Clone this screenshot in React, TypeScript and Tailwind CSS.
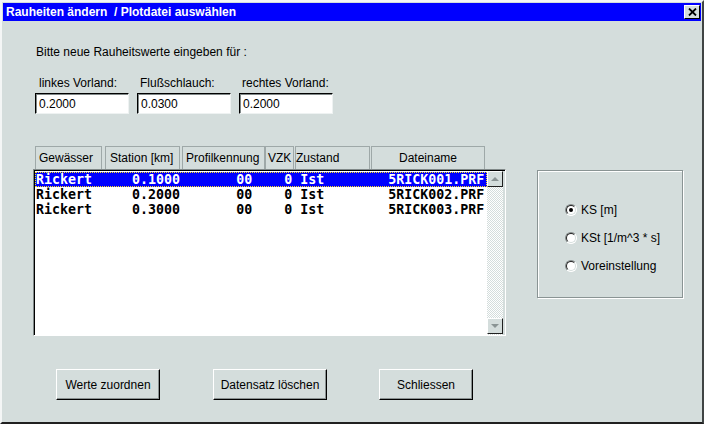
import React from "react";

const rows = [
  ["Rickert", "0.1000", "00", "0", "Ist", "5RICK001.PRF"],
  ["Rickert", "0.2000", "00", "0", "Ist", "5RICK002.PRF"],
  ["Rickert", "0.3000", "00", "0", "Ist", "5RICK003.PRF"],
];

const headers = [
  { label: "Gewässer", w: "w-[67px]", mr: "mr-[3px]", align: "pl-[3px]" },
  { label: "Station [km]", w: "w-[75px]", mr: "mr-[2px]", align: "pl-[4px]" },
  { label: "Profilkennung", w: "w-[83px]", mr: "mr-0", align: "pl-[3px]" },
  { label: "VZK", w: "w-[29px]", mr: "mr-[1px]", align: "pl-[2px]" },
  { label: "Zustand", w: "w-[75px]", mr: "mr-[1px]", align: "pl-0" },
  { label: "Dateiname", w: "w-[114px]", mr: "mr-0", align: "justify-center" },
];

function line(r: string[]) {
  return r[0].padEnd(12) + r[1] + "       " + r[2] + "    " + r[3] + " " + r[4].padEnd(11) + r[5];
}

function Radio({ checked, label }: { checked?: boolean; label: string }) {
  return (
    <div className="flex items-center h-[28px]">
      <div className="w-[12px] h-[12px] rounded-full border border-t-[#808888] border-l-[#808888] border-b-white border-r-white bg-white flex items-center justify-center">
        <div className="w-[10px] h-[10px] rounded-full border border-t-[#202020] border-l-[#202020] border-b-[#d4dddc] border-r-[#d4dddc] bg-white flex items-center justify-center">
          {checked && <div className="w-[4px] h-[4px] rounded-full bg-black" />}
        </div>
      </div>
      <span className="ml-[4px]">{label}</span>
    </div>
  );
}

function Button({ label, w }: { label: string; w: string }) {
  return (
    <button className={`${w} h-[31px] bg-[#d4dddc] border-t border-l border-white border-b border-r border-b-black border-r-black shadow-[inset_-1px_-1px_0_#8a9292] text-[12px] text-black`}>
      {label}
    </button>
  );
}

export default function App() {
  return (
    <div
      className="w-[704px] h-[424px] bg-[#d4dddc] border-t-2 border-l-2 border-t-[#f4f6f6] border-l-[#f4f6f6] border-r-2 border-b-2 border-r-[#404444] border-b-[#202020] pt-[1px] pl-[1px] text-[12px] text-black overflow-hidden"
      style={{ fontFamily: '"Liberation Sans", Arial, sans-serif' }}
    >
      {/* title bar */}
      <div className="h-[18px] w-[698px] bg-[#0000ff] flex items-center justify-between pl-[3px] pr-[1px]">
        <span className="text-white font-bold text-[12px] whitespace-pre">Rauheiten ändern  / Plotdatei auswählen</span>
        <div className="w-[16px] h-[14px] bg-[#d4dddc] border-t border-l border-white border-b border-r border-b-black border-r-black flex items-center justify-center">
          <svg width="9" height="8" viewBox="0 0 9 8">
            <path d="M1 0.5 L8 7.5 M8 0.5 L1 7.5" stroke="black" strokeWidth="1.8" />
          </svg>
        </div>
      </div>

      <div className="pl-[30px]">
        <div className="mt-[24px] pl-[3px] leading-[14px]">Bitte neue Rauheitswerte eingeben für :</div>

        <div className="flex mt-[17px] ml-[2px] gap-[8px]">
          {[
            ["linkes Vorland:", "0.2000", "pl-[4px]"],
            ["Flußschlauch:", "0.0300", "pl-[3px]"],
            ["rechtes Vorland:", "0.2000", "pl-[3px]"],
          ].map(([lab, val, pl]) => (
            <div key={lab} className="w-[94px]">
              <div className={`${pl} leading-[14px]`}>{lab}</div>
              <div className="mt-[3px] h-[21px] bg-white border-t border-l border-t-black border-l-black border-b border-r border-b-[#eef2f2] border-r-[#eef2f2] shadow-[inset_1px_1px_0_#808888] flex items-center pl-[3px]">
                {val}
              </div>
            </div>
          ))}
        </div>

        <div className="flex mt-[32px]">
          <div>
            <div className="flex ml-[2px] h-[23px]">
              {headers.map((h) => (
                <div
                  key={h.label}
                  className={`${h.w} ${h.mr} h-[23px] border-t border-l border-r border-[#9ea8a8] flex items-center ${h.align}`}
                >
                  {h.label}
                </div>
              ))}
            </div>
            <div className="w-[473px] h-[167px] border-t border-l border-t-[#808888] border-l-[#808888] border-b border-r border-b-white border-r-white">
              <div className="w-full h-full bg-white border-t border-l border-t-black border-l-black flex">
                <div className="w-[452px] pt-[1px]">
                  {rows.map((r, i) => (
                    <div
                      key={i}
                      className={`h-[15px] flex items-center pl-[1px] whitespace-pre font-bold text-[13.3px] leading-[15px] ${
                        i === 0 ? "bg-[#0000ff] text-white outline outline-1 outline-dotted outline-yellow-300 -outline-offset-1" : "text-black"
                      }`}
                      style={{ fontFamily: '"DejaVu Sans Mono", "Liberation Mono", monospace' }}
                    >
                      {line(r)}
                    </div>
                  ))}
                </div>
                <div className="w-[16px] flex flex-col bg-[repeating-conic-gradient(#ffffff_0_25%,#d4dddc_0_50%)] bg-[length:2px_2px]">
                  <div className="h-[16px] bg-[#d4dddc] border-t border-l border-white border-b border-r border-b-[#202020] border-r-[#202020] flex items-center justify-center">
                    <svg width="8" height="4" viewBox="0 0 8 4"><path d="M0 4 L4 0 L8 4Z" fill="#8a9494" /></svg>
                  </div>
                  <div className="flex-1" />
                  <div className="h-[16px] mb-[1px] bg-[#d4dddc] border-t border-l border-white border-b border-r border-b-[#202020] border-r-[#202020] flex items-center justify-center">
                    <svg width="8" height="4" viewBox="0 0 8 4"><path d="M0 0 L8 0 L4 4Z" fill="#8a9494" /></svg>
                  </div>
                </div>
                <div className="flex-1 bg-[#d4dddc]" />
              </div>
            </div>
          </div>

          <div className="ml-[31px] mt-[24px] w-[146px] h-[128px] border border-[#8a9494] shadow-[1px_1px_0_#ffffff,inset_1px_1px_0_#ffffff] pt-[25px] pl-[27px]">
            <Radio checked label="KS [m]" />
            <Radio label="KSt [1/m^3 * s]" />
            <Radio label="Voreinstellung" />
          </div>
        </div>

        <div className="flex mt-[33px] ml-[23px]">
          <Button label="Werte zuordnen" w="w-[104px]" />
          <div className="ml-[53px]"><Button label="Datensatz löschen" w="w-[114px]" /></div>
          <div className="ml-[52px]"><Button label="Schliessen" w="w-[94px]" /></div>
        </div>
      </div>
    </div>
  );
}
